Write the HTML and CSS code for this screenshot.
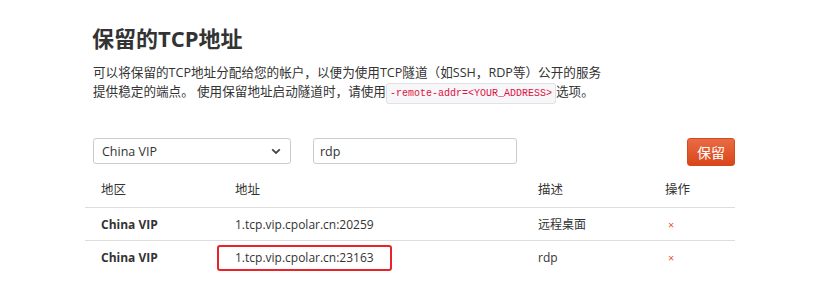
FILE: index.html
```html
<!DOCTYPE html>
<html>
<head>
  <meta charset="utf-8">
  <title>保留的TCP地址</title>
  <link rel="stylesheet" href="styles.css">
</head>
<body>
  <div class="main">
    <h2 class="title">保留的TCP地址</h2>
    <p class="intro">
      可以将保留的TCP地址分配给您的<a href="#">帐户</a>，以便为使用TCP隧道（如SSH，RDP等）公开的服务<br>
      提供稳定的端点。 使用保留地址启动隧道时，请使用<code>-remote-addr=&lt;YOUR_ADDRESS&gt;</code>选项。
    </p>

    <form class="reserve_form" action="javascript:void(0);">
      <div class="select_wrap">
        <select name="region">
          <option>China VIP</option>
          <option>China</option>
          <option>United States</option>
        </select>
        <svg class="chevron" width="10" height="7" viewBox="0 0 10 7">
          <path d="M1.2 1.4 L5 5 L8.8 1.4" fill="none" stroke="#444" stroke-width="1.8"/>
        </svg>
      </div>
      <input type="text" name="desc" value="rdp">
      <button class="btn_reserve">保留</button>
    </form>

    <table class="tbl_addr">
      <colgroup>
        <col class="c_region">
        <col class="c_addr">
        <col class="c_desc">
        <col class="c_op">
      </colgroup>
      <thead>
        <tr>
          <th>地区</th>
          <th>地址</th>
          <th>描述</th>
          <th>操作</th>
        </tr>
      </thead>
      <tbody>
        <tr>
          <td class="region">China VIP</td>
          <td>1.tcp.vip.cpolar.cn:20259</td>
          <td>远程桌面</td>
          <td><a class="del" href="#">×</a></td>
        </tr>
        <tr class="last">
          <td class="region">China VIP</td>
          <td><span class="marked">1.tcp.vip.cpolar.cn:23163</span></td>
          <td>rdp</td>
          <td><a class="del" href="#">×</a></td>
        </tr>
      </tbody>
    </table>
  </div>
</body>
</html>
```

FILE: styles.css
```css
body {
  margin: 0;
  background-color: #fff;
  color: #333;
  font-family: "Open Sans", "Noto Sans CJK SC", sans-serif;
  font-size: 12px;
}
.main {
  width: 650px;
  margin-left: 85px;
  padding-top: 23px;
}
.title {
  margin: 0 0 0 7px;
  font-size: 22px;
  line-height: 30px;
  font-weight: bold;
  color: #333;
}
.intro {
  margin: 10px 0 0 8px;
  font-size: 12.6px;
  line-height: 19px;
}
.intro a {
  color: #333;
  text-decoration: none;
}
.intro code {
  font-family: "Liberation Mono", monospace;
  font-size: 10px;
  line-height: 1;
  color: #dd1144;
  background-color: #f7f7f9;
  border: 1px solid #e1e1e8;
  border-radius: 3px;
  padding: 4px 3px;
}
.reserve_form {
  display: flex;
  align-items: flex-start;
  margin: 37px 0 0 8px;
}
.select_wrap {
  position: relative;
  width: 198px;
}
.select_wrap select {
  appearance: none;
  -webkit-appearance: none;
  width: 198px;
  height: 26px;
  padding: 0 8px;
  border: 1px solid #ccc;
  border-radius: 3px;
  background-color: #fff;
  color: #333;
  font-family: inherit;
  font-size: 12.5px;
}
.chevron {
  position: absolute;
  right: 10px;
  top: 10px;
}
.reserve_form input {
  width: 204px;
  height: 26px;
  box-sizing: border-box;
  margin-left: 22px;
  padding: 0 6px;
  border: 1px solid #ccc;
  border-radius: 3px;
  color: #333;
  font-family: inherit;
  font-size: 12.5px;
}
.btn_reserve {
  margin-left: auto;
  width: 48px;
  height: 28px;
  border: 1px solid #d24a1f;
  border-radius: 3px;
  background: linear-gradient(#ea6b42, #d8461a);
  color: #fff;
  font-family: inherit;
  font-size: 14px;
  cursor: pointer;
}
.tbl_addr {
  width: 650px;
  margin-top: 5px;
  border-collapse: collapse;
  table-layout: fixed;
}
.c_region { width: 142px; }
.c_addr { width: 303px; }
.c_desc { width: 127px; }
.c_op { width: 78px; }
.tbl_addr th {
  text-align: left;
  font-weight: normal;
  font-size: 12.5px;
  padding: 9px 8px 7px;
  line-height: 20px;
  border-bottom: 1px solid #ddd;
}
.tbl_addr td {
  padding: 7px 8px 5px;
  line-height: 20px;
  border-bottom: 1px solid #ddd;
}
.tbl_addr tr.last td {
  border-bottom: none;
}
.tbl_addr th:first-child,
.tbl_addr td:first-child {
  padding-left: 16px;
}
.region {
  font-weight: bold;
}
.del {
  color: #e4572e;
  text-decoration: none;
  font-size: 11px;
  line-height: 1;
  padding-left: 3px;
}
.marked {
  display: inline-block;
  margin: -4px 0 -2px -18px;
  padding: 2px 16px;
  line-height: 18px;
  border: 2px solid #e8232a;
  border-radius: 3px;
  vertical-align: middle;
}
```
